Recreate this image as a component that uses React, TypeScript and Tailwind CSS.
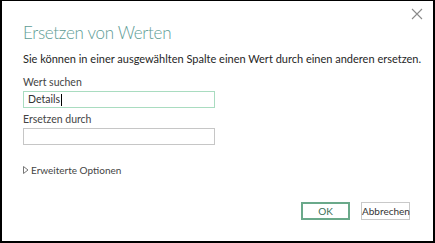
export default function App() {
  return (
    <div
      className="w-[435px] h-[243px] bg-white border-l-2 border-t border-r-2 border-b-2 border-black relative text-[#333]"
      style={{ fontFamily: 'Lato, "Noto Sans", sans-serif' }}
    >
      {/* Close */}
      <button className="absolute right-[10px] top-[7px] w-[12px] h-[12px] text-[#8a8a8a]">
        <svg viewBox="0 0 12 12" width="12" height="12" stroke="currentColor" strokeWidth="1.1">
          <path d="M1 1 L11 11 M11 1 L1 11" />
        </svg>
      </button>

      <div className="pl-[21px] pt-[21px] pr-[8px]">
        <h1 className="text-[17px] leading-[22px] font-light text-[#5e9c95] tracking-[-0.3px]">Ersetzen von Werten</h1>
        <p className="mt-[8px] whitespace-nowrap text-[11px] leading-[14px] text-[#262626]">
          Sie können in einer ausgewählten Spalte einen Wert durch einen anderen ersetzen.
        </p>

        <div className="mt-[9px] text-[10.5px] leading-[14px] text-[#444]">Wert suchen</div>
        <div className="mt-[2px] w-[192px] h-[17px] border border-[#a9dcc0] flex items-center pl-[4px] text-[10.5px] text-[#333]">
          Details<span className="w-px h-[12px] bg-black ml-px" />
        </div>

        <div className="mt-[4px] text-[10.5px] leading-[14px] text-[#444]">Ersetzen durch</div>
        <div className="mt-[2px] w-[192px] h-[17px] border border-[#c6c6c6]" />

        <div className="mt-[18px] flex items-center gap-[2px] text-[10px] leading-[14px] text-[#444]">
          <svg width="6" height="8" viewBox="0 0 6 8" className="text-[#777]">
            <path d="M0.5 0.5 L5 4 L0.5 7.5 Z" fill="none" stroke="currentColor" strokeWidth="1" />
          </svg>
          Erweiterte Optionen
        </div>
      </div>

      <div className="absolute right-[23px] bottom-[21px] flex gap-[11px] text-[10px]">
        <button className="w-[49px] h-[18px] border-2 border-[#6aa98a] text-[#3c6f55] leading-none">OK</button>
        <button className="w-[49px] h-[18px] border border-[#c9c9c9] text-[#333] leading-none">Abbrechen</button>
      </div>
    </div>
  );
}
